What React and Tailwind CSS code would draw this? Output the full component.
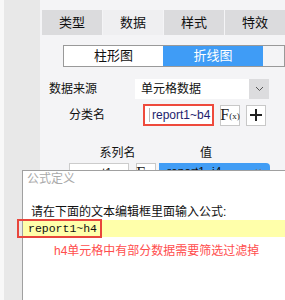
import React from 'react';

const cjk = { fontFamily: '"Liberation Sans", "Noto Sans CJK SC", sans-serif' };
const mono = { fontFamily: '"Liberation Mono", monospace' };

// Fx 按钮
const FxButton = ({ className = '' }) => (
    <div className={`flex items-center justify-center bg-white border border-[#c8c8c8] ${className}`}>
        <span className="text-[16px] leading-none text-[#222]" style={{ fontFamily: '"Liberation Serif", serif' }}>F</span>
        <span className="text-[9px] leading-none text-[#222] mt-[3px]" style={{ fontFamily: '"Liberation Serif", serif' }}>(x)</span>
    </div>
);

const Tab = ({ label, active }) => (
    <div className={`w-[60px] h-[25px] flex items-center justify-center text-[13px] text-[#111] ${active ? 'bg-[#efeff1]' : 'bg-[#dbdbdd]'}`}>
        {label}
    </div>
);

const App = () => {
    return (
        <div className="relative w-[285px] h-[300px] overflow-hidden flex bg-[#f4f4f6]" style={cjk}>
            <div className="w-[5px] bg-[#f8f8f8]" />
            <div className="w-[40px] bg-[#e8e8e8]" />

            {/* 右侧属性面板 */}
            <div className="flex-1 flex flex-col pt-[10px]">
                <div className="flex gap-px ml-[2px]">
                    <Tab label="类型" />
                    <Tab label="数据" active />
                    <Tab label="样式" />
                    <Tab label="特效" />
                </div>

                <div className="flex ml-[23px] mt-[10px] h-[22px] border border-[#999]">
                    <div className="w-[99px] flex items-center justify-center bg-white text-[13px] text-[#111]">柱形图</div>
                    <div className="w-[100px] flex items-center justify-center bg-[#3f9cf6] text-[13px] text-white">折线图</div>
                </div>

                <div className="flex items-center mt-[12px] h-[20px]">
                    <span className="ml-[9px] w-[86px] text-[12px] text-[#111]">数据来源</span>
                    <div className="flex h-[20px] w-[134px]">
                        <div className="flex-1 bg-white flex items-center pl-[6px] text-[12px] text-[#111]">单元格数据</div>
                        <div className="w-[20px] bg-[#dcdcde] flex items-center justify-center">
                            <svg width="9" height="6" viewBox="0 0 9 6">
                                <path d="M1 1 L4.5 4.5 L8 1" fill="none" stroke="#555" strokeWidth="1" />
                            </svg>
                        </div>
                    </div>
                </div>

                <div className="flex items-center mt-[5px] h-[22px]">
                    <span className="ml-[29px] w-[74px] text-[12px] text-[#111]">分类名</span>
                    <div className="relative w-[71px] h-[22px] border-2 border-[#ee4a3c] bg-white flex items-center pl-[7px]">
                        <div className="absolute left-[4px] top-[2px] bottom-[2px] w-px bg-[#bbb]" />
                        <span className="text-[12px] text-[#1e1e6e]">report1~b4</span>
                    </div>
                    <FxButton className="ml-[6px] w-[20px] h-[21px]" />
                    <div className="ml-[6px] w-[20px] h-[21px] bg-white border border-[#c8c8c8] flex items-center justify-center">
                        <svg width="12" height="12" viewBox="0 0 12 12">
                            <path d="M6 0 V12 M0 6 H12" stroke="#222" strokeWidth="2" />
                        </svg>
                    </div>
                </div>

                <div className="flex mt-[20px] h-[15px] text-[12px] text-[#111]">
                    <div className="ml-[32px] w-[85px] flex flex-col items-center">
                        <span className="leading-[15px] ml-[6px]">系列名</span>
                        <div className="w-full h-[2px] bg-[#b4b4b4]" />
                    </div>
                    <div className="ml-[7px] w-[84px] flex flex-col items-center">
                        <span className="leading-[15px]">值</span>
                        <div className="w-full h-[2px] bg-[#b4b4b4]" />
                    </div>
                </div>

                <div className="flex mt-[2px] h-[20px]">
                    <div className="ml-[29px] w-[60px] bg-white border border-[#ccc] flex items-start pl-[4px] text-[12px] text-[#111]">report1</div>
                    <FxButton className="ml-[7px] w-[20px] h-[20px]" />
                    <div className="ml-[3px] w-[111px] bg-[#419df5] rounded-tr-[4px] flex items-start justify-between px-[8px] text-[12px] text-[#111]">
                        <span>report1~i4</span>
                        <span className="text-[#777]">×</span>
                    </div>
                </div>
            </div>

            {/* 公式定义 弹窗 */}
            <div className="absolute left-[22px] top-[170px] right-0 bottom-0 bg-white border-l border-t border-[#a0a0a0] flex flex-col">
                <div className="h-[16px] pl-[4px] text-[12px] leading-[16px] text-[#aaa]">公式定义</div>
                <div className="mt-[18px] pl-[8px] text-[12px] leading-[14px] text-[#111]">请在下面的文本编辑框里面输入公式:</div>
                <div className="mt-[1px] h-[17px] bg-[#ffffaa] flex items-center pl-[5px]">
                    <span className="text-[11.5px] text-[#111]" style={mono}>report1~h4</span>
                </div>
                <div className="mt-[7px] pl-[31px] text-[12px] leading-[14px] text-[#ff4d4d]">h4单元格中有部分数据需要筛选过滤掉</div>
            </div>

            {/* 红色标注框 */}
            <div className="absolute left-[17px] top-[219px] w-[85px] h-[19px] border-2 border-[#e8463c]" />
        </div>
    );
};

export default App;
